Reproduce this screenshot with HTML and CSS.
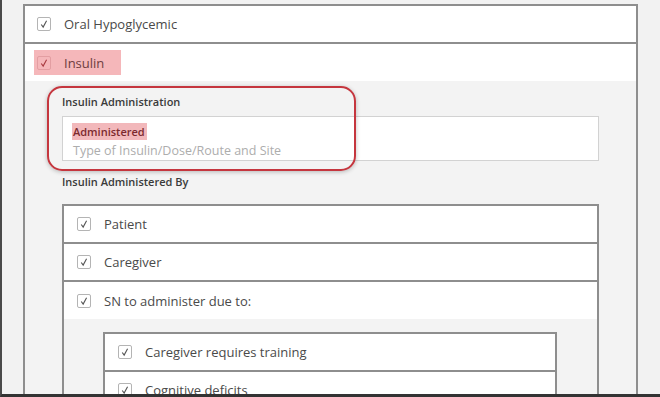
FILE: index.html
```html
<!DOCTYPE html>
<html lang="en">
<head>
  <meta charset="UTF-8" />
  <title>Diabetic Management</title>
  <link rel="stylesheet" href="styles.css">
</head>
<body>
  <div class="screen">
    <div class="list outer">
      <div class="row">
        <span class="cb"><svg viewBox="0 0 14 14"><path d="M3.8 7.6 L6 10.6 L10 3.2" /></svg></span>
        <span class="txt">Oral Hypoglycemic</span>
      </div>
      <div class="row open">
        <span class="hl">
          <span class="cb"><svg viewBox="0 0 14 14"><path d="M3.8 7.6 L6 10.6 L10 3.2" /></svg></span>
          <span class="txt">Insulin</span>
        </span>
      </div>
      <div class="sub">
        <div class="callout"></div>
        <div class="field-label">Insulin Administration</div>
        <div class="textbox">
          <div><span class="mark">Administered</span></div>
          <div class="ph">Type of Insulin/Dose/Route and Site</div>
        </div>
        <div class="field-label by">Insulin Administered By</div>

        <div class="list inner">
          <div class="row">
            <span class="cb"><svg viewBox="0 0 14 14"><path d="M3.8 7.6 L6 10.6 L10 3.2" /></svg></span>
            <span class="txt">Patient</span>
          </div>
          <div class="row">
            <span class="cb"><svg viewBox="0 0 14 14"><path d="M3.8 7.6 L6 10.6 L10 3.2" /></svg></span>
            <span class="txt">Caregiver</span>
          </div>
          <div class="row open">
            <span class="cb"><svg viewBox="0 0 14 14"><path d="M3.8 7.6 L6 10.6 L10 3.2" /></svg></span>
            <span class="txt">SN to administer due to:</span>
          </div>
          <div class="sub nested-wrap">
            <div class="list nested">
              <div class="row">
                <span class="cb"><svg viewBox="0 0 14 14"><path d="M3.8 7.6 L6 10.6 L10 3.2" /></svg></span>
                <span class="txt">Caregiver requires training</span>
              </div>
              <div class="row">
                <span class="cb"><svg viewBox="0 0 14 14"><path d="M3.8 7.6 L6 10.6 L10 3.2" /></svg></span>
                <span class="txt">Cognitive deficits</span>
              </div>
            </div>
          </div>
        </div>
      </div>
    </div>
  </div>
</body>
</html>
```

FILE: styles.css
```css
* {
  box-sizing: border-box;
}

body {
  margin: 0;
  font-family: 'Open Sans', 'Noto Sans', sans-serif;
  background: #f2f2f2;
}

.screen {
  width: 660px;
  height: 397px;
  overflow: hidden;
  background: #f2f2f2;
  border-left: 2px solid #4a4a4a;
  border-bottom: 3px solid #333;
  padding: 4px 0 0 21px;
}

.list {
  background: #fff;
  border: 2px solid #8e8e8e;
  border-bottom: none;
}

.outer {
  width: 615px;
}

.row {
  height: 38px;
  display: flex;
  align-items: center;
  gap: 13px;
  padding-left: 12px;
  border-bottom: 2px solid #8e8e8e;
}

.row.open {
  border-bottom: none;
  height: 37px;
}

.inner .row,
.nested .row {
  padding-left: 13px;
}

.cb {
  width: 14px;
  height: 14px;
  flex: none;
  border: 1px solid #b4b4b4;
  border-radius: 2px;
  background: #fff;
  display: flex;
}

.cb svg {
  width: 12px;
  height: 12px;
  fill: none;
  stroke: #555;
  stroke-width: 1.3;
}

.txt {
  font-size: 13px;
  color: #4a4a4a;
}

.hl {
  display: flex;
  align-items: center;
  gap: 13px;
  margin-left: -3px;
  padding: 0 17px 0 3px;
  height: 25px;
  background: #f5b7ba;
}

.hl .cb {
  background: transparent;
  border-color: #e39ea2;
}

.hl .cb svg {
  stroke: #a83a40;
}

.hl .txt {
  color: #6e3d40;
}

.sub {
  position: relative;
  background: #f3f3f3;
  padding: 13px 37px 0 37px;
}

.callout {
  position: absolute;
  left: 22px;
  top: 5px;
  width: 309px;
  height: 85px;
  border: 2px solid #c5363e;
  border-radius: 15px;
  box-shadow: 0 1px 4px rgba(0, 0, 0, 0.25);
}

.field-label {
  font-size: 11px;
  font-weight: 600;
  color: #3a3a3a;
  line-height: 15px;
}

.textbox {
  margin-top: 7px;
  height: 45px;
  background: #fff;
  border: 1px solid #d2d2d2;
  padding: 4px 10px 0 10px;
  line-height: 19px;
}

.mark {
  font-size: 11px;
  font-weight: 600;
  color: #7c2a2e;
  background: #f2b8bb;
  padding: 1px 2px 1px 1px;
  margin-left: -1px;
}

.ph {
  font-size: 12.5px;
  color: #adadad;
}

.field-label.by {
  margin-top: 13px;
}

.inner {
  margin-top: 15px;
}

.nested-wrap {
  padding: 13px 40px 0 39px;
}
```
